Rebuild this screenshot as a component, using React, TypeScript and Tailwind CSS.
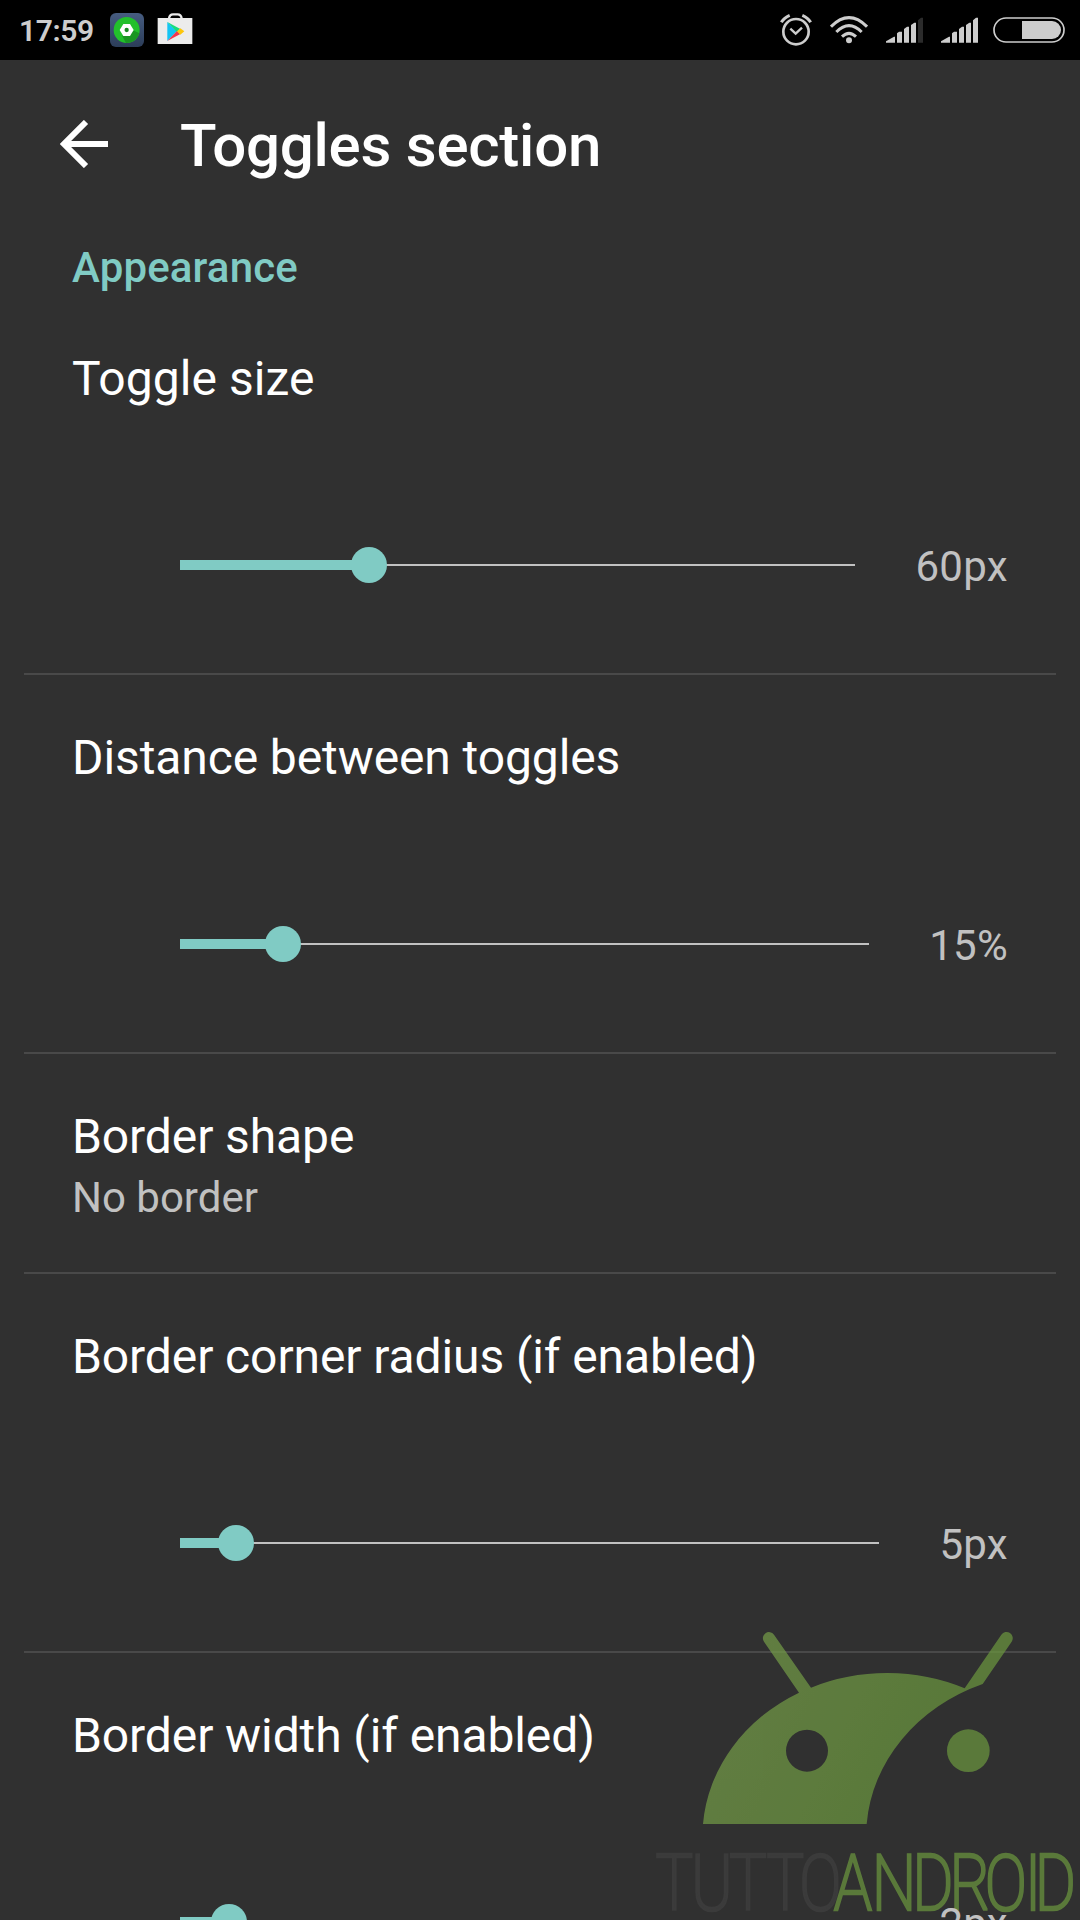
import clsx from "clsx";

type Setting = {
  title: string;
  summary?: string;
  value?: string;
  position?: number;
};

// position is the distance in px from the start of the track to the thumb's centre
const SETTINGS: Setting[] = [
  { title: "Toggle size", value: "60px", position: 189 },
  { title: "Distance between toggles", value: "15%", position: 103 },
  { title: "Border shape", summary: "No border" },
  { title: "Border corner radius (if enabled)", value: "5px", position: 56 },
  { title: "Border width (if enabled)", value: "2px", position: 49 },
];

function AppBadge() {
  return (
    <svg className="h-[34px] w-[34px]" viewBox="0 0 102 102">
      <defs>
        <linearGradient id="badge" x1="0" y1="0" x2="0" y2="1">
          <stop offset="0" stopColor="#465c80" />
          <stop offset="1" stopColor="#2c3d59" />
        </linearGradient>
      </defs>
      <rect width="102" height="102" rx="18" fill="url(#badge)" />
      <circle cx="50" cy="51" r="39" fill="#22c02b" />
      <path d="M68 51l20 10a39 39 0 0 1-40 29L36 68z" fill="#1a9622" />
      <path d="M40 33h20l11 18-11 18H40L29 51z" fill="#fff" />
      <circle cx="50" cy="51" r="6.5" fill="#178a20" />
    </svg>
  );
}

function PlayStore() {
  return (
    <svg className="ml-[13px] h-[34px] w-[36px]" viewBox="0 0 108 102">
      <path d="M36 16q2-12 12-12h14q10 0 12 12" fill="none" stroke="#ececec" strokeWidth="7" />
      <path d="M2 15h104v78H2z" fill="#ececec" />
      <path d="M31 27v57l29-29z" fill="#14c4f4" />
      <path d="M31 27l39 21-10 9z" fill="#15dd7c" />
      <path d="M31 84l39-21-10-9z" fill="#f8364c" />
      <path d="M70 46l12 9-12 10-10-10z" fill="#fdc60b" />
    </svg>
  );
}

function Signal({ full }: { full?: boolean }) {
  return (
    <svg className="h-[26px] w-[37px]" viewBox="0 0 111 78" fill="#cdcdcd">
      <path d="M0 77v-4l24-14h3v18z" />
      <path d="M33 77V49l6-5h9v33z" />
      <path d="M54 77V36l9-7h6v48z" />
      <path d="M75 77V24l10-7h5v60z" />
      <path d="M96 77V10l9-8h6v75z" fill={full ? "#cdcdcd" : "#2b2b2b"} />
    </svg>
  );
}

function StatusBar() {
  return (
    <div className="flex h-[60px] shrink-0 items-center bg-black pr-[15px] pl-[19px] text-[#cdcdcd]">
      <span className="w-[91px] pt-[2px] text-[30px] leading-none font-semibold tracking-[-0.4px]">17:59</span>
      <AppBadge />
      <PlayStore />
      <svg className="ml-auto h-[34px] w-[32px]" viewBox="0 0 96 102" fill="none" stroke="#cdcdcd" strokeWidth="8">
        <circle cx="48" cy="56" r="38" />
        <path d="M31 47l16 15 19-18" strokeWidth="7" />
        <path d="M4 28Q12 14 29 7M92 28Q84 14 67 7" strokeWidth="9" />
      </svg>
      <svg className="ml-[18px] h-[28px] w-[38px]" viewBox="0 0 114 84" fill="none" stroke="#cdcdcd" strokeWidth="9">
        <path d="M3 32Q57-22 111 32" />
        <path d="M19 48Q57 10 95 48" />
        <path d="M36 62Q57 42 78 62" />
        <circle cx="57" cy="73" r="9" fill="#cdcdcd" stroke="none" />
      </svg>
      <div className="ml-[18px] flex gap-[18px]">
        <Signal />
        <Signal full />
      </div>
      <svg className="ml-[15px] h-[26px] w-[72px]" viewBox="0 0 216 78">
        <rect x="3" y="3" width="210" height="72" rx="36" fill="none" stroke="#cdcdcd" strokeWidth="5" />
        <path d="M87 12h90a27 27 0 0 1 0 54H87z" fill="#cdcdcd" />
      </svg>
    </div>
  );
}

function SettingRow({ setting, first }: { setting: Setting; first?: boolean }) {
  const { title, summary, value, position } = setting;
  return (
    <div
      className={clsx(
        "mx-6 shrink-0 border-b-2 border-[#494949] px-12",
        first ? "h-[375px]" : summary ? "h-[220px]" : "h-[379px]",
      )}
    >
      <div
        className={clsx(
          "text-[48px] leading-[56px] text-white",
          first ? "pt-[51px] tracking-[0.05px]" : "pt-[55px] tracking-[-0.1px]",
        )}
      >
        {title}
      </div>
      {summary && <div className="mt-[8px] text-[42px] leading-[49px] text-[#c1c1c1]">{summary}</div>}
      {value && (
        <div className="mt-[131px] flex h-[54px] items-center pl-[108px]">
          <div className="relative flex h-9 flex-1 items-center">
            <div className="h-[2px] w-full bg-[#c1c1c1]" />
            <div
              className="absolute left-0 flex items-center justify-end"
              style={{ width: (position ?? 0) + 18 }}
            >
              <div className="h-[10px] flex-1 bg-[#80cbc4]" />
              <div className="-ml-1 h-9 w-9 rounded-full bg-[#80cbc4]" />
            </div>
          </div>
          <div className="relative z-10 ml-[60px] pt-[2px] text-[42px] leading-[49px] tracking-[0.3px] text-[#c1c1c1]">
            {value}
          </div>
        </div>
      )}
    </div>
  );
}

function Watermark() {
  return (
    <svg className="absolute right-0 bottom-0 h-[310px] w-[440px]" viewBox="0 0 1320 930">
      <defs>
        <linearGradient id="head" gradientUnits="userSpaceOnUse" x1="250" y1="300" x2="760" y2="560">
          <stop offset="0" stopColor="#769e49" />
          <stop offset="1" stopColor="#6c993f" />
        </linearGradient>
      </defs>
      <g opacity="0.7">
        <path
          fill="url(#head)"
          fillRule="evenodd"
          d="M189 642A552 491 0 0 1 477 248L372 95A18 18 0 0 1 402 74L513 233A552 491 0 0 1 974 235L1084 74A18 18 0 0 1 1115 95L1028 222A552 491 0 0 0 680 642ZM438 422a63 63 0 1 0 126 0a63 63 0 1 0-126 0Z"
        />
        <circle cx="985" cy="422" r="64" fill="#6c993f" />
        <g transform="scale(0.8 1)" fontFamily="Roboto" fontWeight="200" fontSize="236" strokeWidth="8">
          <text x="58 191 335 474 597" y="899" fill="#404040" stroke="#404040">
            TUTTO
          </text>
          <text x="727 869 1021 1161 1293 1443 1480" y="899" fill="#6c993f" stroke="#6c993f">
            ANDROID
          </text>
        </g>
      </g>
    </svg>
  );
}

export default function App() {
  return (
    <div className="relative flex h-[1920px] w-[1080px] flex-col overflow-hidden bg-[#303030] font-['Roboto',sans-serif]">
      <StatusBar />
      <header className="flex h-[168px] shrink-0 items-center pl-[60px]">
        <svg className="h-12 w-12" viewBox="0 0 48 48" fill="none" stroke="#fff" strokeWidth="6">
          <path d="M48 24H5M26 2L4 24l22 22" />
        </svg>
        <h1 className="ml-[72px] pt-[4px] text-[60px] leading-[70px] font-medium tracking-[-0.25px] text-white">
          Toggles section
        </h1>
      </header>
      <h2 className="h-[72px] shrink-0 pt-[15px] pl-[72px] text-[42px] leading-[50px] font-medium tracking-[0.15px] text-[#80cbc4]">
        Appearance
      </h2>
      {SETTINGS.map((setting, i) => (
        <SettingRow key={setting.title} setting={setting} first={i === 0} />
      ))}
      <Watermark />
    </div>
  );
}
